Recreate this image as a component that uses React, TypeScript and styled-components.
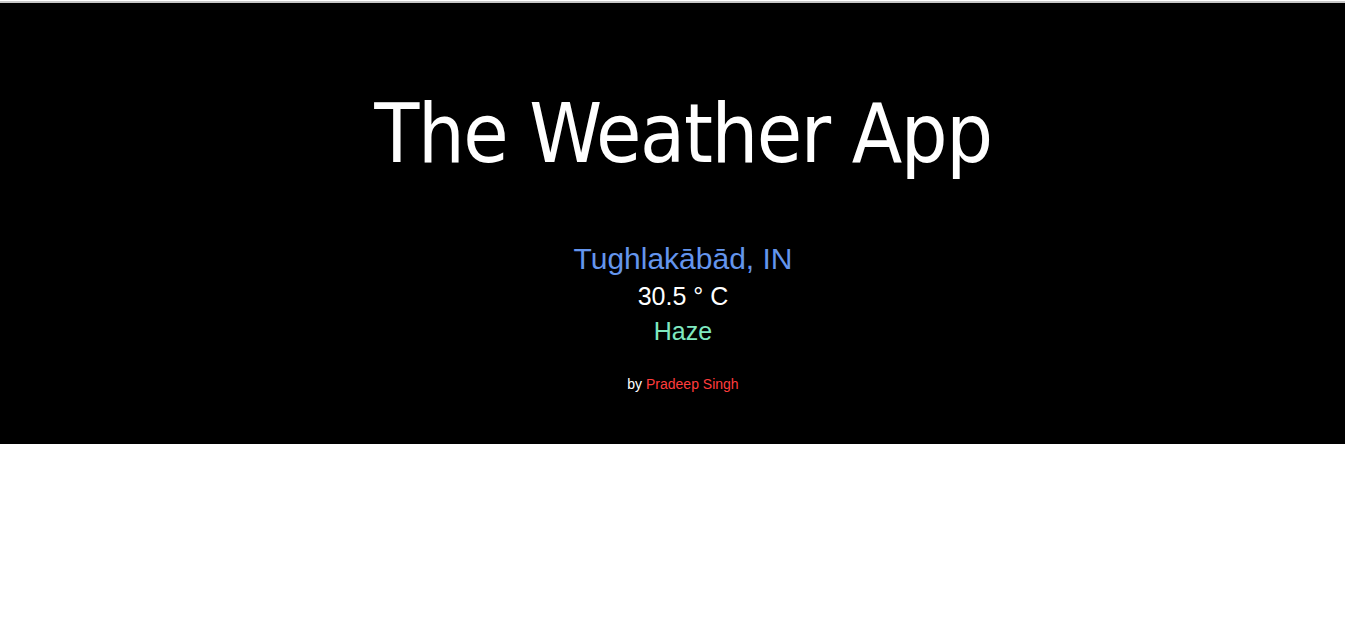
import styled, { createGlobalStyle } from "styled-components";

const GlobalStyle = createGlobalStyle`
  html, body {
    margin: 0;
    padding: 0;
    background: #ffffff;
  }
  body {
    font-family: "Liberation Sans", Arial, sans-serif;
  }
`;

const weather = {
  city: "Tughlakābād",
  country: "IN",
  temp: 30.5,
  desc: "Haze",
  author: "Pradeep Singh",
};

export default function App() {
  return (
    <>
      <GlobalStyle />
      <TopLine />
      <Header>
        <Title>The Weather App</Title>
        <Info>
          <Location>
            {weather.city}, {weather.country}
          </Location>
          <Temp>{weather.temp} ° C</Temp>
          <Desc>{weather.desc}</Desc>
        </Info>
        <Credit>
          by <Author>{weather.author}</Author>
        </Credit>
      </Header>
    </>
  );
}

const TopLine = styled.div`
  height: 3px;
  border-top: 1px solid #ffffff;
  background: #c8c8c8;
  box-sizing: border-box;
`;

const Header = styled.header`
  background: #000000;
  height: 441px;
  display: flex;
  flex-direction: column;
  align-items: center;
  padding: 84px 0 0 21px;
  box-sizing: border-box;
`;

const Title = styled.h1`
  margin: 0;
  font-family: "DejaVu Sans Condensed", "DejaVu Sans", sans-serif;
  font-weight: normal;
  font-size: 82px;
  letter-spacing: -1.4px;
  line-height: 94px;
  color: #ffffff;
`;

const Info = styled.div`
  display: flex;
  flex-direction: column;
  align-items: center;
  margin-top: 59px;
`;

const Location = styled.div`
  font-size: 30px;
  line-height: 38px;
  color: #6495ed;
`;

const Temp = styled.div`
  font-size: 25px;
  line-height: 36px;
  color: #ffffff;
`;

const Desc = styled.div`
  font-size: 25px;
  line-height: 34px;
  color: #7fe8c0;
`;

const Credit = styled.p`
  margin: 28px 0 0;
  font-size: 14px;
  line-height: 16px;
  color: #ffffff;
`;

const Author = styled.span`
  color: #ff3c3c;
`;
